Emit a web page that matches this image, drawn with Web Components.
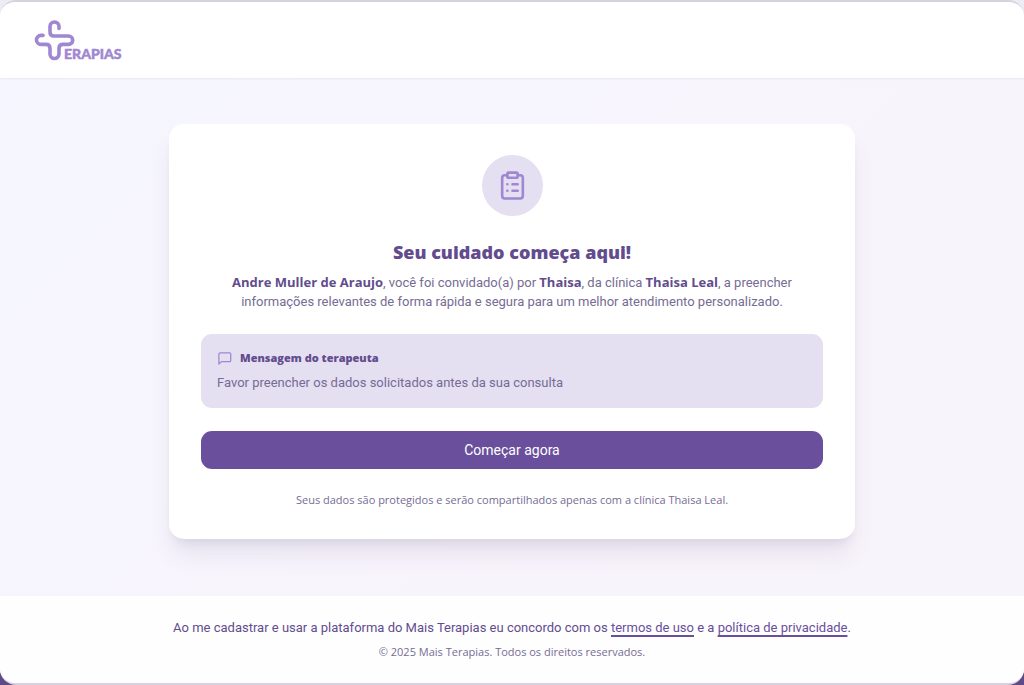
<!DOCTYPE html>
<html lang="pt-BR">
<head>
<meta charset="utf-8">
<meta name="viewport" content="width=device-width, initial-scale=1">
<title>Mais Terapias</title>
<style>
  :root {
    --purple: #694f9c;
    --purple-dark: #624c8e;
    --purple-mid: #9f87d1;
    --lilac: #e4dff1;
    --text: #766c94;
    --accent-font: "Open Sans", "Noto Sans", sans-serif;
  }
  html { background: #5d4a86; }
  body {
    margin: 0;
    font-family: Roboto, "Noto Sans", sans-serif;
    font-size: 13px;
    line-height: 19px;
    color: var(--text);
  }
</style>
</head>
<body>
<app-window>
  <site-header slot="header"></site-header>
  <invite-card>
    <clipboard-badge slot="icon"></clipboard-badge>
    <span slot="title">Seu cuidado começa aqui!</span>
    <invite-text slot="text"></invite-text>
    <therapist-message>
      <span slot="title">Mensagem do terapeuta</span>
      Favor preencher os dados solicitados antes da sua consulta
    </therapist-message>
    <primary-button>Começar agora</primary-button>
    <span slot="note">Seus dados são protegidos e serão compartilhados apenas com a clínica Thaisa Leal.</span>
  </invite-card>
  <site-footer slot="footer"></site-footer>
</app-window>

<script>
  const define = (name, html) => {
    const template = document.createElement('template');
    template.innerHTML = html;
    customElements.define(name, class extends HTMLElement {
      constructor() {
        super();
        this.attachShadow({ mode: 'open' }).append(template.content.cloneNode(true));
      }
    });
  };

  define('app-window', `
    <style>
      :host { display: block; background: linear-gradient(#eeebf3 50%, transparent 50%); }
      .frame {
        box-sizing: border-box;
        min-height: 100vh;
        display: flex;
        flex-direction: column;
        overflow: hidden;
        border: solid #d6d2e0;
        border-width: 2px 0;
        border-radius: 16px;
        background: linear-gradient(135deg, #f5f6ff, #f8f4fc 60%, #f8f4fb);
      }
      main {
        flex: 1;
        display: flex;
        justify-content: center;
        align-items: flex-start;
        padding: 46px 16px 56px;
      }
    </style>
    <div class="frame">
      <slot name="header"></slot>
      <main><slot></slot></main>
      <slot name="footer"></slot>
    </div>`);

  define('site-header', `
    <style>
      :host { display: block; background: #fff; box-shadow: 0 1px 2px #5a4a8014; }
      header { padding: 16px 32px; }
      a { display: block; width: 96px; }
      svg { display: block; }
      text {
        font: 900 14px Lato, sans-serif;
        fill: var(--purple-mid);
        stroke: var(--purple-mid);
        stroke-width: 0.5;
        stroke-linejoin: round;
      }
    </style>
    <header>
      <a href="#" aria-label="Mais Terapias">
        <svg width="96" height="44" viewBox="32 18 96 44">
          <path fill="none" stroke="#9f87d1" stroke-width="3.6" stroke-linecap="round" stroke-linejoin="round"
            d="M59 28.500V26.500A4.500 4.500 0 0 0 50 26.500V32Q50 36 54 36H68.500A4.200 4.200 0 0 1 68.500 44.400H63Q59 44.400 59 48.400V54A4.500 4.500 0 0 1 50 54V48.400Q50 44.400 46 44.400H41A4.500 4.500 0 0 1 41 35.400H43"/>
          <text x="64" y="59">ERAPIAS</text>
        </svg>
      </a>
    </header>`);

  define('clipboard-badge', `
    <style>
      :host {
        display: grid;
        place-items: center;
        width: 61px;
        height: 61px;
        border-radius: 50%;
        background: var(--lilac);
      }
    </style>
    <svg width="31" height="31" viewBox="0 0 24 24" fill="none" stroke="#9f87d1" stroke-width="2" stroke-linecap="round" stroke-linejoin="round" aria-hidden="true">
      <rect x="8" y="2" width="8" height="4" rx="1"/>
      <path d="M16 4h2a2 2 0 0 1 2 2v14a2 2 0 0 1-2 2H6a2 2 0 0 1-2-2V6a2 2 0 0 1 2-2h2M12 11h4M12 16h4M8 11h.01M8 16h.01"/>
    </svg>`);

  define('invite-text', `
    <style>
      :host { display: block; }
      p { margin: 0; }
      strong { font-family: var(--accent-font); color: var(--purple-dark); font-weight: 700; }
      @media (max-width: 680px) { br { display: none; } }
    </style>
    <p><strong>Andre Muller de Araujo</strong>, você foi convidado(a) por <strong>Thaisa</strong>, da clínica <strong>Thaisa Leal</strong>, a preencher <br>informações relevantes de forma rápida e segura para um melhor atendimento personalizado.</p>`);

  define('invite-card', `
    <style>
      :host { display: block; width: 100%; max-width: 686px; }
      section {
        padding: 31px 32px 31px;
        display: flex;
        flex-direction: column;
        border-radius: 15px;
        background: #fff;
        box-shadow: 0 8px 10px -5px #5046701c, 0 18px 24px -4px #5046701c;
      }
      .intro {
        display: flex;
        flex-direction: column;
        align-items: center;
        text-align: center;
      }
      h1 {
        margin: 23px 0 8px;
        font-family: var(--accent-font);
        font-size: 18px;
        line-height: 26px;
        font-weight: 800;
        color: var(--purple-dark);
      }
      .body {
        margin-top: 23px;
        display: flex;
        flex-direction: column;
        gap: 23px;
      }
      .note {
        margin: 0;
        text-align: center;
        font-family: var(--accent-font);
        font-size: 11px;
        line-height: 16px;
      }
    </style>
    <section>
      <div class="intro">
        <slot name="icon"></slot>
        <h1><slot name="title"></slot></h1>
        <slot name="text"></slot>
      </div>
      <div class="body">
        <slot></slot>
        <p class="note"><slot name="note"></slot></p>
      </div>
    </section>`);

  define('therapist-message', `
    <style>
      :host {
        display: block;
        padding: 16px 16px 15px;
        border-radius: 11px;
        background: var(--lilac);
      }
      h2 {
        margin: 0 0 7px;
        display: flex;
        align-items: center;
        gap: 8px;
        font-family: var(--accent-font);
        font-size: 11px;
        line-height: 16px;
        font-weight: 800;
        color: var(--purple-dark);
      }
      p { margin: 0; line-height: 20px; }
    </style>
    <h2>
      <svg width="15" height="15" viewBox="0 0 24 24" fill="none" stroke="#9f87d1" stroke-width="2" stroke-linecap="round" stroke-linejoin="round" aria-hidden="true">
        <path d="M22 15a2 2 0 0 1-2 2H7l-4 4V5a2 2 0 0 1 2-2h15a2 2 0 0 1 2 2z"/>
      </svg>
      <slot name="title"></slot>
    </h2>
    <p><slot></slot></p>`);

  define('primary-button', `
    <style>
      :host { display: block; }
      button {
        display: block;
        width: 100%;
        padding: 9px 16px;
        border: 0;
        border-radius: 11px;
        background: var(--purple);
        color: #fff;
        font: inherit;
        font-size: 14px;
        line-height: 20px;
        cursor: pointer;
      }
    </style>
    <button type="button"><slot></slot></button>`);

  define('site-footer', `
    <style>
      :host { display: block; background: #fefefe; }
      footer { padding: 22px 16px 23px; text-align: center; }
      p { margin: 0; color: var(--purple-dark); }
      small { display: block; margin-top: 7px; font-family: var(--accent-font); font-size: 11px; line-height: 16px; }
      a { color: var(--purple); text-decoration: underline 2px; text-underline-offset: 3px; }
    </style>
    <footer>
      <p>Ao me cadastrar e usar a plataforma do Mais Terapias eu concordo com os <a href="#termos">termos de uso</a> e a <a href="#privacidade">política de privacidade</a>.</p>
      <small>© 2025 Mais Terapias. Todos os direitos reservados.</small>
    </footer>`);
</script>
</body>
</html>
